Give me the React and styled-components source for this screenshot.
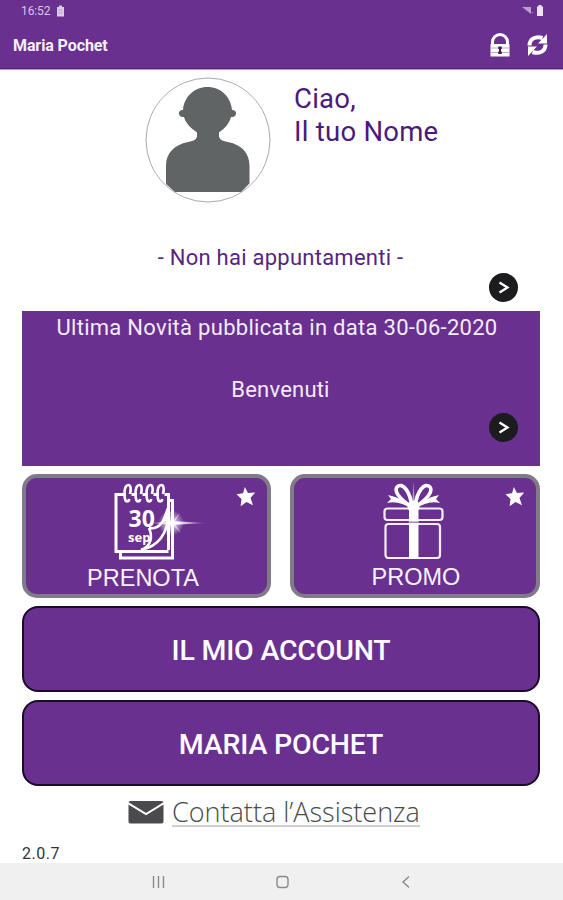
import React from 'react';
import styled, { createGlobalStyle } from 'styled-components';

const PURPLE = '#693090';

const GlobalStyle = createGlobalStyle`
  * {
    box-sizing: border-box;
  }
  body {
    margin: 0;
    background: #fff;
    font-family: Roboto, sans-serif;
  }
  button {
    font-family: inherit;
    padding: 0;
  }
`;

const Screen = styled.div`
  display: flex;
  flex-direction: column;
  width: 563px;
  height: 900px;
  overflow: hidden;
`;

const Header = styled.header`
  flex: none;
  height: 70px;
  background: ${PURPLE};
  border-bottom: 1px solid #b79bca;
  box-shadow: inset 0 -1px 0 #56207c;
`;

const StatusBar = styled.div`
  display: flex;
  align-items: center;
  height: 22px;
  padding: 0 19px 0 21px;
  color: #d8c5e4;
  font-size: 12px;
`;

const Clock = styled.span`
  width: 29px;
  margin-right: 6px;
  letter-spacing: -0.1px;
`;

const StatusIcons = styled.svg`
  margin-left: auto;
`;

const AppBar = styled.div`
  display: flex;
  align-items: center;
  height: 46px;
  padding: 0 15px 0 13px;
`;

const AppTitle = styled.h1`
  margin: 0;
  flex: 1;
  color: #f5effa;
  font-size: 16px;
  font-weight: 700;
  letter-spacing: -0.1px;
`;

const AppActions = styled.div`
  display: flex;
  gap: 17px;
`;

const Content = styled.main`
  display: flex;
  flex-direction: column;
  flex: 1;
  padding: 0 23px 0 22px;
`;

const Profile = styled.section`
  display: flex;
  gap: 22px;
  height: 134px;
  padding: 7px 0 0 123px;
`;

const Greeting = styled.p`
  margin: 5px 0 0;
  color: #4b1a7b;
  font-size: 27.5px;
  line-height: 33px;
  letter-spacing: 0.25px;
  white-space: nowrap;
`;

const Appointments = styled.section`
  display: flex;
  flex-direction: column;
  height: 107px;
  padding: 40px 22px 9px 0;
`;

const AppointmentText = styled.p`
  margin: 0 0 0 21px;
  text-align: center;
  color: #562580;
  font-size: 22px;
  line-height: 28px;
  letter-spacing: 0.25px;
`;

const ArrowButton = styled.button`
  display: flex;
  align-items: center;
  justify-content: center;
  width: 29px;
  height: 29px;
  margin: auto 0 0 auto;
  border: 0;
  border-radius: 50%;
  background: #1c1b1d;
`;

const News = styled.section`
  display: flex;
  flex-direction: column;
  height: 155px;
  padding: 3px 22px 24px 0;
  background: ${PURPLE};
  color: #f3ecf8;
  font-size: 22px;
  line-height: 28px;
  text-align: center;
`;

const NewsTitle = styled.p`
  margin: 0 0 34px 14px;
  letter-spacing: 0.29px;
`;

const NewsText = styled.p`
  margin: 0 0 0 21px;
  letter-spacing: 0.2px;
`;

const Tiles = styled.section`
  display: grid;
  grid-template-columns: 249px 250px;
  justify-content: space-between;
  margin-top: 8px;
`;

const Tile = styled.button`
  position: relative;
  display: flex;
  flex-direction: column;
  align-items: center;
  height: 124px;
  padding-top: 4px;
  border: 4px solid #807b87;
  border-radius: 15px;
  background: ${PURPLE};
`;

const TileLabel = styled.span`
  margin-left: ${({ $shift }) => $shift}px;
  margin-top: ${({ $top }) => $top}px;
  color: #f7f2fb;
  font-family: 'Liberation Sans', Arial, sans-serif;
  font-size: 23.5px;
  line-height: 26px;
`;

const TileStar = styled.svg`
  position: absolute;
  top: 8px;
  right: 11px;
`;

const MenuButton = styled.button`
  height: 86px;
  margin-top: 8px;
  padding-top: 3px;
  border: 2px solid #1b0b27;
  border-radius: 16px;
  background: ${PURPLE};
  color: #fdfbff;
  font-size: 28.5px;
  font-weight: 500;
  letter-spacing: -0.2px;
`;

const Support = styled.a`
  display: flex;
  align-items: flex-start;
  gap: 8px;
  height: 58px;
  padding: 11px 0 0 106px;
  color: #4b4b4d;
`;

const SupportText = styled.span`
  height: 30px;
  border-bottom: 2px solid #cfcfcf;
  font-family: 'Open Sans', 'Noto Sans', sans-serif;
  font-size: 27px;
  font-weight: 300;
  line-height: 29px;
  white-space: nowrap;
`;

const Version = styled.span`
  color: #333;
  font-size: 16px;
  line-height: 19px;
  letter-spacing: 0.5px;
`;

const NavBar = styled.nav`
  display: flex;
  align-items: center;
  flex: none;
  gap: 108px;
  height: 37px;
  padding-left: 151px;
  background: #f0f0f0;
`;

const CalendarSvg = styled.svg`
  flex: none;
  margin-left: 28px;
`;

const GiftSvg = styled.svg`
  flex: none;
  margin-right: 3px;
`;

const MailSvg = styled.svg`
  margin-top: 3px;
`;

const BatteryIcon = () => (
  <svg width="9" height="12" viewBox="0 0 9 12">
    <path d="M3 .5h3V2h2v9.500H1V2h2z" fill="#dccbe7" />
    <path d="M2.500 5h4M2.500 8h4" stroke="#b89cca" />
  </svg>
);

const LockIcon = () => (
  <svg width="20" height="24" viewBox="0 0 20 24">
    <path d="M2.500 11V9a7.500 7.500 0 0 1 15 0v2" fill="none" stroke="#fff" strokeWidth="3" />
    <path d="M.5 11h19v12.500H.5z" fill="#fff" />
    <path d="M.5 15h19M.5 19.500h19" stroke="#bda3ce" strokeWidth="1" />
    <path d="M8.300 13.500h3.400v2.500h-.7v2.500h.7V21H8.300v-2.500H9V16h-.7z" fill="#3c1c52" />
  </svg>
);

const RefreshIcon = () => (
  <svg width="21" height="24" viewBox="0 0 21 24">
    <g fill="none" stroke="#fff" strokeWidth="4">
      <path d="M2.500 12.500C2.500 6 8.500 2.500 15.500 5" />
      <path d="M18.500 11.500c0 6.500-6 10-13 7.500" />
    </g>
    <path d="M20 1v9.500h-9zM1 23v-9.500h9z" fill="#fff" />
  </svg>
);

const Avatar = () => (
  <svg width="127" height="127" viewBox="0 0 127 127">
    <circle cx="63" cy="63" r="62" fill="#fff" stroke="#ababab" />
    <path
      d="M62.500 10C76 10 86 20 87 33c3 0 4.500 2 4 4s-2 3.500-5 3c-2 7-6 11-12 15.500v4c1 4 5 4.500 9 5.500 14 3 21.500 11 21.500 24v17.500L96 115H30l-9-8V89c0-13 8-21 22-24 4-1 8-1.500 9-5.500v-4C46 51 41 47 39 40c-3 .5-4.500-1-5-3s1-4 4-4c1-13 11-23 24.500-23z"
      fill="#616465"
    />
  </svg>
);

const Chevron = () => (
  <svg width="13" height="13" viewBox="0 0 13 13">
    <path d="M2.500 1.500l8 5-8 5" fill="none" stroke="#fff" strokeWidth="2.300" />
  </svg>
);

const Star = () => (
  <TileStar width="20" height="21" viewBox="0 0 20 21">
    <path d="M8.800 1l3.200 6 7.200-.5-4.700 5.500 2.500 7.200-6.500-3.200-5.900 4.300.9-7.300L.5 8.200l6.600-1z" fill="#fff" />
  </TileStar>
);

const rings = [16, 27, 38, 49];

const CalendarArt = () => (
  <CalendarSvg width="100" height="80" viewBox="0 0 100 80">
    <defs>
      <linearGradient id="streak">
        <stop offset="0" stopColor="#fff" stopOpacity="0.2" />
        <stop offset="0.450" stopColor="#fff" />
        <stop offset="1" stopColor="#fff" stopOpacity="0" />
      </linearGradient>
      <radialGradient id="glow">
        <stop offset="0" stopColor="#fff" />
        <stop offset="0.400" stopColor="#fff" stopOpacity="0.600" />
        <stop offset="1" stopColor="#fff" stopOpacity="0" />
      </radialGradient>
    </defs>
    <g fill="none" stroke="#fff" strokeWidth="3">
      <path d="M58 12.500H5v57h27" />
      <path d="M57.500 11v57M28 69.500h29.500" />
      <path d="M9.500 71v5H61.500V18.500H58" />
    </g>
    {rings.map(x => (
      <g key={x}>
        <path d={`M${x - 1} 10.500h5.500v4h-5.500z`} fill={PURPLE} />
        <path
          d={`M${x + 3} 12c1.500-5 .5-9-1.500-9-2.500 0-4 4-4 9 0 4.500 1 7.500 2.500 7.500 1 0 2-1 2.300-2.500`}
          fill="none"
          stroke="#fff"
          strokeWidth="2.600"
        />
      </g>
    ))}
    <g fill="#fff" fontFamily="Open Sans, sans-serif" fontWeight="700">
      <text x="17.500" y="44.500" fontSize="23">30</text>
      <text x="17" y="60" fontSize="13">sep</text>
    </g>
    <g fill="none" stroke="#fff" strokeWidth="2.600">
      <path d="M58 24C54 40 48 48 38 46" />
      <path d="M38 46c3.500 8 3 18-8 22" />
      <path d="M58 30c-1 19-9 34-28 38" />
    </g>
    <path d="M58 20v18l-8 3z" fill="#fff" />
    <circle cx="60" cy="41" r="13" fill="url(#glow)" />
    <path d="M40 41l20-2L96 41l-36 2z" fill="url(#streak)" />
    <path d="M60 41l9-10-6 10 7 10z" fill="#fff" opacity="0.600" />
  </CalendarSvg>
);

const GiftArt = () => (
  <GiftSvg width="64" height="80" viewBox="0 0 64 80">
    <g fill="none" stroke="#f6effb" strokeWidth="2.200">
      <rect x="2.500" y="26.500" width="58" height="11.500" rx="3" />
      <rect x="3.500" y="42" width="54.500" height="34" rx="3" />
    </g>
    <path d="M27 24h9.500v53H27z" fill="#fff" />
    <path d="M26.500 40.200h10.500" stroke="#a483bd" strokeWidth="1.500" />
    <g fill="none" stroke="#fff">
      <path d="M30 25C17 17 12 9 15 5c5-5 13 3 15 20z" strokeWidth="3.600" />
      <path d="M33 25c13-8 18-16 15-20-5-5-13 3-15 20z" strokeWidth="3.600" />
    </g>
    <path d="M30 26C22 17 13 15 6 13l3 4-4 4c8-2 16 0 25 6zM33 26c8-9 17-11 24-13l-3 4 4 4c-8-2-16 0-25 6z" fill="#fff" />
    <circle cx="31.500" cy="24.500" r="6" fill="#fff" />
    <path d="M31.500 0l1.200 21h-2.400z" fill="#fff" opacity="0.500" />
  </GiftSvg>
);

const MailIcon = () => (
  <MailSvg width="36" height="24" viewBox="0 0 36 24">
    <rect x="0.500" y="1" width="35" height="22.500" rx="2" fill="#4b4b4d" />
    <path d="M0 3l18 11L36 3" fill="none" stroke="#fff" strokeWidth="2" />
  </MailSvg>
);

const NavIcon = ({ children }) => (
  <svg width="16" height="16" viewBox="0 0 16 16" fill="none" stroke="#8a8a8a" strokeWidth="1.400">
    {children}
  </svg>
);

const App = () => (
  <>
    <GlobalStyle />
    <Screen>
      <Header>
        <StatusBar>
          <Clock>16:52</Clock>
          <BatteryIcon />
          <StatusIcons width="23" height="12" viewBox="0 0 23 12">
            <path d="M1 2h9v7z" fill="#bd9fd0" />
            <path d="M10.500 8l2-1" stroke="#a17fbb" />
            <path d="M17.500 0h3v1.500h1.500V11h-6V1.500h1.500z" fill="#eee3f5" />
          </StatusIcons>
        </StatusBar>
        <AppBar>
          <AppTitle>Maria Pochet</AppTitle>
          <AppActions>
            <LockIcon />
            <RefreshIcon />
          </AppActions>
        </AppBar>
      </Header>
      <Content>
        <Profile>
          <Avatar />
          <Greeting>
            Ciao,
            <br />
            Il tuo Nome
          </Greeting>
        </Profile>
        <Appointments>
          <AppointmentText>- Non hai appuntamenti -</AppointmentText>
          <ArrowButton><Chevron /></ArrowButton>
        </Appointments>
        <News>
          <NewsTitle>Ultima Novità pubblicata in data 30-06-2020</NewsTitle>
          <NewsText>Benvenuti</NewsText>
          <ArrowButton><Chevron /></ArrowButton>
        </News>
        <Tiles>
          <Tile>
            <CalendarArt />
            <TileLabel $shift={-7} $top={3}>PRENOTA</TileLabel>
            <Star />
          </Tile>
          <Tile>
            <GiftArt />
            <TileLabel $shift={2} $top={2}>PROMO</TileLabel>
            <Star />
          </Tile>
        </Tiles>
        <MenuButton>IL MIO ACCOUNT</MenuButton>
        <MenuButton>MARIA POCHET</MenuButton>
        <Support>
          <MailIcon />
          <SupportText>Contatta l’Assistenza</SupportText>
        </Support>
        <Version>2.0.7</Version>
      </Content>
      <NavBar>
        <NavIcon><path d="M2.500 2v12M7.500 2v12M12.500 2v12" /></NavIcon>
        <NavIcon><rect x="2" y="2.500" width="11" height="11" rx="3" /></NavIcon>
        <NavIcon><path d="M10 2.500L4 8l6 5.500" /></NavIcon>
      </NavBar>
    </Screen>
  </>
);

export default App;
